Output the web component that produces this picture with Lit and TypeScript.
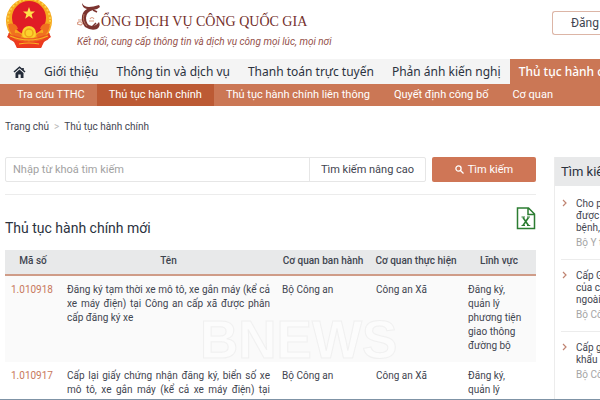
import { LitElement, html, css, svg } from "lit";
import { customElement } from "lit/decorators.js";
import { classMap } from "lit/directives/class-map.js";

const NAV = ["Giới thiệu", "Thông tin và dịch vụ", "Thanh toán trực tuyến", "Phản ánh kiến nghị", "Thủ tục hành chính"];
const SUBNAV = ["Tra cứu TTHC", "Thủ tục hành chính", "Thủ tục hành chính liên thông", "Quyết định công bố", "Cơ quan"];

const ROWS = [
  {
    code: "1.010918",
    name: "Đăng ký tạm thời xe mô tô, xe gắn máy (kể cả xe máy điện) tại Công an cấp xã được phân cấp đăng ký xe",
    issuer: "Bộ Công an",
    executor: "Công an Xã",
    field: "Đăng ký, quản lý phương tiện giao thông đường bộ",
    full: false,
  },
  {
    code: "1.010917",
    name: "Cấp lại giấy chứng nhận đăng ký, biển số xe mô tô, xe gắn máy (kể cả xe máy điện) tại",
    issuer: "Bộ Công an",
    executor: "Công an Xã",
    field: "Đăng ký, quản lý",
    full: true,
  },
];

const POPULAR = [
  { lines: ["Cho phép", "được khám", "bệnh, chữa"], org: "Bộ Y tế" },
  { lines: ["Cấp Giấy", "của công", "ngoài nước"], org: "Bộ Công an" },
  { lines: ["Cấp giấy", "khẩu"], org: "Bộ Công an" },
];

const emblem = svg`
  <path d="M8 26 L2 37 L9 42 L12 48 L36 48 L39 42 L46 37 L40 26Z" fill="#e8391f"/>
  <circle cx="24" cy="21" r="23" fill="#f6a81d"/>
  <circle cx="24" cy="20" r="21" fill="none" stroke="#fbd04a" stroke-width="2" stroke-dasharray="2 2"/>
  <circle cx="24" cy="18" r="17" fill="#e01c26"/>
  <path d="M24 7 L25.600 11.400 L30 11.500 L26.600 14.300 L27.800 18.700 L24 16.100 L20.200 18.700 L21.400 14.300 L18 11.500 L22.400 11.400Z" fill="#ffe14a"/>
  <path d="M3 24 q8 -2 10 5 q-4 0 -3 4 q5 -1 7 3 l-4 3 q-9 -4 -10 -15z M45 24 q-8 -2 -10 5 q4 0 3 4 q-5 -1 -7 3 l4 3 q9 -4 10 -15z" fill="#f0701f"/>
  <circle cx="24" cy="33" r="7" fill="#fbd22d"/>
  <circle cx="24" cy="33" r="4" fill="none" stroke="#f0a41b" stroke-width="1.500"/>
  <path d="M3 33 Q24 43 45 33 L43 40 Q24 46 5 40Z" fill="#ea4a20" opacity="0.750"/>
  <path d="M10 40 Q24 44 38 40 L36 48 Q24 45 12 48Z" fill="#ee3a1e"/>
  <path d="M5 36 Q24 44 43 36 M14 44 Q24 42 34 44" fill="none" stroke="#f8b623" stroke-width="1.200"/>`;

const dragon = svg`
  <path d="M5 2 Q7 6 12 6 Q16 6 22 4 L23 6 Q20 9 16 9 Q9 11 9 17 Q9 24 15 25 Q19 25 22 21 Q24 25 20 28 Q14 30 8 26 Q4 21 5 15 Q6 10 10 8 Q5 7 5 2Z" fill="#7c3430"/>
  <path d="M16 9 L20 11 M15 26 L19 22" stroke="#7c3430" stroke-width="1.500" fill="none"/>
  <path d="M0 23 q1 -3 4 -2 q3 1 0 3 z M1 19 h4 M13 18 q2 -3 4 0 M12 20 h5" stroke="#d99b84" stroke-width="1.200" fill="none"/>
  <path d="M7 13 q-2 7 3 12" stroke="#b9765f" stroke-width="1" fill="none"/>`;

@customElement("app-root")
export class AppRoot extends LitElement {
  static styles = css`
    :host {
      display: block;
      position: relative;
      height: 100vh;
      overflow: hidden;
      background: #fff;
      color: #3f4550;
      font: 11px/14px Roboto, "Noto Sans", sans-serif;
    }
    * { box-sizing: border-box; }
    a { color: inherit; text-decoration: none; }
    button, input { font: inherit; color: inherit; margin: 0; }
    ul { list-style: none; margin: 0; padding: 2px 0 0; }
    .brand { display: flex; align-items: flex-start; height: 59px; padding-left: 5px; }
    .emblem { width: 48px; height: 49px; flex: none; }
    .titles { flex: 1; padding-left: 24px; white-space: nowrap; }
    .title {
      display: flex;
      align-items: center;
      height: 32px;
      margin: 0;
      color: #74302c;
      font: 400 14px/20px "Liberation Serif", serif;
    }
    .title svg { width: 24px; height: 30px; flex: none; }
    .title span { padding-top: 12px; }
    .slogan { margin: 2px 0 0; color: #94504a; font-style: italic; line-height: 16px; font-size: 10px; }
    .login {
      flex: none;
      width: 48px;
      height: 24px;
      margin-top: 11px;
      padding: 0 0 0 18px;
      border: 1px solid #dcb5a6;
      border-right: 0;
      border-radius: 3px 0 0 3px;
      background: #fff;
      overflow: hidden;
      text-align: left;
      white-space: nowrap;
      font-size: 12px;
    }
    .nav, .subnav { display: flex; white-space: nowrap; overflow: hidden; }
    .nav { height: 25px; background: #f4f4f4; color: #2b323e; font-family: "Noto Sans", sans-serif; font-size: 12px; line-height: 25px; }
    .nav a { flex: none; padding: 0 9px; }
    .nav .home { display: flex; align-items: center; padding: 0 9px 0 13px; }
    .home svg { width: 13px; height: 12px; }
    .nav .on { background: #cb7755; color: #fff; font-weight: 500; }
    .subnav { height: 22px; padding-left: 5px; background: #cb7755; color: #fff; line-height: 22px; }
    .subnav a { flex: none; padding: 0 12px; }
    .subnav .on { background: #bc5a34; }
    .crumbs { display: flex; gap: 5px; padding: 14px 5px 0; font-size: 10px; }
    .crumbs span { color: #b9b9b9; }
    .page { display: flex; gap: 18px; padding: 23px 0 0 5px; }
    .main { flex: 1; min-width: 0; }
    .search { display: flex; gap: 6px; height: 38px; padding-bottom: 12px; border-bottom: 1px solid #ececec; }
    .box { flex: 1; display: flex; border: 1px solid #e6e6e6; border-radius: 2px; min-width: 0; }
    .box input { flex: 1; min-width: 0; border: 0; padding: 0 7px; background: none; outline: 0; }
    .box input::placeholder { color: #a2a2a2; opacity: 1; }
    .box button { width: 116px; border: 0; border-left: 1px solid #e6e6e6; background: none; padding: 0; white-space: nowrap; }
    .search .go {
      display: flex;
      align-items: center;
      justify-content: center;
      gap: 4px;
      width: 104px;
      border: 0;
      border-radius: 2px;
      background: #cf7656;
      color: #fff;
      white-space: nowrap;
    }
    .go svg { width: 9px; height: 9px; }
    .head { display: flex; align-items: flex-end; justify-content: space-between; padding: 12px 0 13px; }
    h2 { margin: 0; font-size: 14px; line-height: 18px; font-weight: 400; color: #2b323e; }
    .excel { display: block; height: 30px; }
    .excel svg { display: block; width: 20px; height: 24px; }
    table { width: 100%; border-collapse: collapse; table-layout: fixed; font-size: 10px; }
    th { height: 25px; padding: 0 0 3px; background: #e8e9ea; border-bottom: 2px solid #cf9c88; font-weight: 500; white-space: nowrap; }
    td { padding: 7px 6px 9px; vertical-align: top; }
    td:last-child { padding-right: 12px; }
    tbody tr:first-child { background: #fafafa; }
    .c-code { width: 56px; }
    .c-issuer { width: 94px; }
    .c-exec { width: 92px; }
    .c-field { width: 74px; }
    .code { color: #c8785c; }
    .name { text-align: justify; }
    .full { text-align-last: justify; }
    .side { flex: none; width: 46px; height: 260px; overflow: hidden; white-space: nowrap; border-left: 1px solid #ececec; font-size: 10px; line-height: 12px; }
    .side h2 { height: 29px; padding-left: 6px; background: #e8e9ea; font-size: 13px; line-height: 29px; }
    .side li { display: flex; gap: 8px; margin-left: 6px; padding: 10px 0; border-bottom: 1px solid #ececec; }
    .side li:last-child { border-bottom: 0; }
    .side li svg { width: 7px; height: 8px; margin-top: 1px; flex: none; }
    .line { display: block; }
    .org { display: block; margin-top: 3px; color: #a5a5a5; }
    .mark {
      position: absolute;
      left: 200px;
      top: 311px;
      color: #fdfdfd;
      -webkit-text-stroke: 1px #ededed;
      font: 700 53px/58px "Liberation Sans", sans-serif;
      opacity: 0.7;
      pointer-events: none;
    }
    .edge { position: absolute; left: 0; right: 0; bottom: 0; height: 1px; background: #7f93a6; }
  `;

  render() {
    return html`
      <header class="brand">
        <svg class="emblem" viewBox="0 0 48 49">${emblem}</svg>
        <div class="titles">
          <h1 class="title"><svg viewBox="0 0 24 30">${dragon}</svg><span>ỔNG DỊCH VỤ CÔNG QUỐC GIA</span></h1>
          <p class="slogan">Kết nối, cung cấp thông tin và dịch vụ công mọi lúc, mọi nơi</p>
        </div>
        <button class="login">Đăng nhập</button>
      </header>
      <nav class="nav">
        <a class="home" href="#" aria-label="Trang chủ">
          <svg viewBox="0 0 13 12"><path d="M1 6 L6.500 1.200 L12 6 M10 2 V4" fill="none" stroke="#232b38" stroke-width="1.600"/><path d="M2.500 7 L6.500 3.600 L10.500 7 V12 H7.700 V8.500 H5.300 V12 H2.500Z" fill="#232b38"/></svg>
        </a>
        ${NAV.map((t, i) => html`<a href="#" class=${classMap({ on: i === 4 })}>${t}</a>`)}
      </nav>
      <nav class="subnav">
        ${SUBNAV.map((t, i) => html`<a href="#" class=${classMap({ on: i === 1 })}>${t}</a>`)}
      </nav>
      <div class="crumbs"><a href="#">Trang chủ</a><span>&gt;</span><a href="#">Thủ tục hành chính</a></div>
      <div class="page">
        <main class="main">
          <form class="search">
            <div class="box">
              <input type="text" aria-label="Từ khoá" placeholder="Nhập từ khoá tìm kiếm" />
              <button type="button">Tìm kiếm nâng cao</button>
            </div>
            <button class="go" type="button">
              <svg viewBox="0 0 9 9" fill="none" stroke="#fff" stroke-width="1.300"><circle cx="3.500" cy="3.500" r="2.600"/><path d="M5.500 5.500 L8.500 8.500"/></svg>Tìm kiếm
            </button>
          </form>
          <div class="head">
            <h2>Thủ tục hành chính mới</h2>
            <a class="excel" href="#" aria-label="Excel">
              <svg viewBox="0 0 20 24" fill="none" stroke="#2c7d32" stroke-width="1.500"><path d="M1.500 1 H12.500 L18.500 7 V21.500 H1.500Z M12 1.500 V7.500 H18"/><path d="M7 10.500 L12.500 18.500 M12.500 10.500 L7 18.500" stroke-width="1.600"/><path d="M5.500 10 H9 M11 10 H14 M5.500 18.500 H9 M11 18.500 H14.300" stroke-width="1"/></svg>
            </a>
          </div>
          <table>
            <colgroup><col class="c-code" /><col /><col class="c-issuer" /><col class="c-exec" /><col class="c-field" /></colgroup>
            <thead>
              <tr><th>Mã số</th><th>Tên</th><th>Cơ quan ban hành</th><th>Cơ quan thực hiện</th><th>Lĩnh vực</th></tr>
            </thead>
            <tbody>
              ${ROWS.map((r) => html`<tr>
                <td><a class="code" href="#">${r.code}</a></td>
                <td class=${classMap({ name: true, full: r.full })}>${r.name}</td>
                <td>${r.issuer}</td>
                <td>${r.executor}</td>
                <td>${r.field}</td>
              </tr>`)}
            </tbody>
          </table>
        </main>
        <aside class="side">
          <h2>Tìm kiếm nhiều</h2>
          <ul>
            ${POPULAR.map((p) => html`<li>
              <svg viewBox="0 0 7 8" fill="none" stroke="#c08472" stroke-width="1.200"><path d="M2 1 L5 4 L2 7"/></svg>
              <a href="#">${p.lines.map((l) => html`<span class="line">${l}</span>`)}<span class="org">${p.org}</span></a>
            </li>`)}
          </ul>
        </aside>
      </div>
      <div class="mark" aria-hidden="true">BNEWS</div>
      <div class="edge"></div>
    `;
  }
}
